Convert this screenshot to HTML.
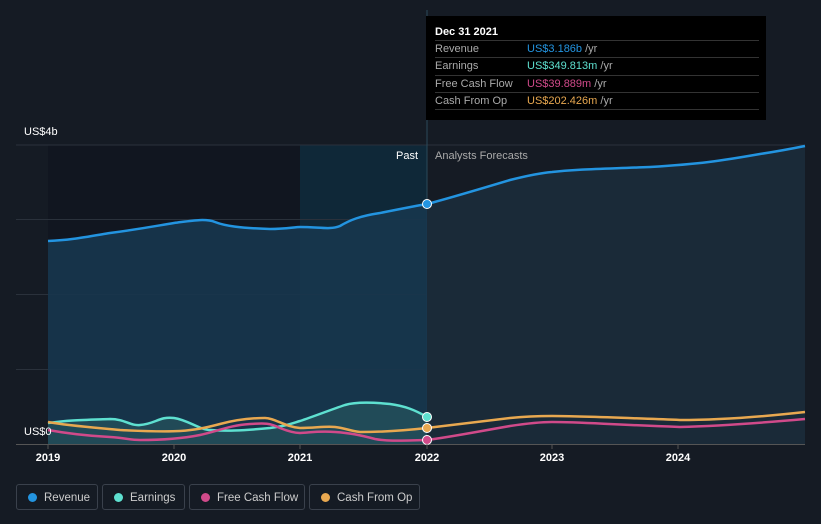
<!DOCTYPE html><html><head><style>
body{margin:0;width:821px;height:524px;background:#151b24;font-family:"Liberation Sans",sans-serif;overflow:hidden;position:relative}
.tt{position:absolute;left:426px;top:16px;width:340px;height:104px;background:#000;color:#fff;font-size:11px}
.tt .h{position:absolute;left:9px;top:10px;font-weight:bold;font-size:11px}
.row{position:absolute;left:9px;width:324px;height:17px;border-top:1px solid #333;color:#aaa;line-height:17px}
.row span{position:absolute;left:92px}
.lg{position:absolute;top:484px;height:26px;border:1px solid #3a414c;border-radius:3px;color:#ccc;font-size:11.5px;line-height:26px;box-sizing:border-box}
.lg i{position:absolute;left:11px;top:8px;width:9px;height:9px;border-radius:50%}
.lg b{font-weight:normal;position:absolute;left:27px}
.ax{position:absolute;top:452px;color:#fff;font-size:11px;font-weight:bold;width:40px;text-align:center}
</style></head><body>
<svg width="821" height="524" style="position:absolute;left:0;top:0">
<rect x="48" y="145" width="252" height="300" fill="#111620"/>
<rect x="300" y="145" width="127" height="300" fill="#0f2838"/>
<g stroke="#2a313b" stroke-width="1">
<line x1="16" y1="145" x2="805" y2="145"/><line x1="16" y1="219.5" x2="805" y2="219.5"/><line x1="16" y1="294.5" x2="805" y2="294.5"/><line x1="16" y1="369.5" x2="805" y2="369.5"/>
</g>
<line x1="16" y1="444.5" x2="805" y2="444.5" stroke="#555"/>
<line x1="427" y1="10" x2="427" y2="444" stroke="#2a4a5a"/>
<path d="M48,241 C70,240 80,238 110,233 C140,229 150,227 174,223 C190,221 205,218 215,222 C225,226 240,228 270,229 C285,229 295,227 300,227 C320,227 330,230 340,226 C350,220 360,216 380,213 C400,209 415,206 427,204 L427,444 L48,444Z" fill="#17364e" opacity="0.9"/>
<path d="M427,204 C450,198 470,192 510,180 C530,175 540,173 552,172 C580,169 600,169 650,167 C700,164 720,161 760,154 C780,151 795,148 805,146 L805,444 L427,444Z" fill="#1a2a38"/>
<path d="M48,423 C70,420 80,420 110,419 C125,419 130,426 140,425 C155,424 160,416 174,418 C188,420 200,430 210,430 C225,431 240,431 270,428 C285,426 290,424 300,421 C315,416 330,410 345,405 C355,402 370,402 390,404 C405,406 415,410 427,417 L427,444 L48,444Z" fill="#2a5a60" opacity="0.6"/>
<g fill="none" stroke-width="2.5">
<path d="M48,241 C70,240 80,238 110,233 C140,229 150,227 174,223 C190,221 205,218 215,222 C225,226 240,228 270,229 C285,229 295,227 300,227 C320,227 330,230 340,226 C350,220 360,216 380,213 C400,209 415,206 427,204 C450,198 470,192 510,180 C530,175 540,173 552,172 C580,169 600,169 650,167 C700,164 720,161 760,154 C780,151 795,148 805,146" stroke="#2394e0"/>
<path d="M48,423 C70,420 80,420 110,419 C125,419 130,426 140,425 C155,424 160,416 174,418 C188,420 200,430 210,430 C225,431 240,431 270,428 C285,426 290,424 300,421 C315,416 330,410 345,405 C355,402 370,402 390,404 C405,406 415,410 427,417" stroke="#5ee0d0"/>
<path d="M48,430 C70,434 90,436 110,437 C125,438 130,440 140,440 C160,440 180,439 200,435 C215,432 230,425 250,424 C265,423 270,423 280,428 C290,432 295,433 300,433 C315,432 320,431 335,432 C350,433 360,435 375,439 C385,441 395,441 427,440 C450,437 470,433 510,426 C530,423 540,422 552,422 C580,422 600,424 680,427 C720,426 760,423 805,419" stroke="#d04a8a"/>
<path d="M48,422 C70,426 100,428 120,430 C140,431 160,432 180,431 C195,430 205,428 220,424 C235,420 250,418 265,418 C275,418 285,427 300,428 C315,428 325,426 335,427 C345,428 350,431 360,432 C380,432 400,431 427,428 C450,425 470,423 510,418 C530,416 540,416 552,416 C580,416 600,417 680,420 C720,420 760,417 805,412" stroke="#e8a850"/>
</g>
<circle cx="427" cy="204" r="4.5" fill="#2394e0" stroke="#fff" stroke-width="1"/>
<circle cx="427" cy="417" r="4.5" fill="#5ee0d0" stroke="#fff" stroke-width="1"/>
<circle cx="427" cy="428" r="4.5" fill="#e8a850" stroke="#fff" stroke-width="1"/>
<circle cx="427" cy="440" r="4.5" fill="#d04a8a" stroke="#fff" stroke-width="1"/>
<g stroke="#555"><line x1="48" y1="444" x2="48" y2="449"/><line x1="174" y1="444" x2="174" y2="449"/><line x1="300" y1="444" x2="300" y2="449"/><line x1="427" y1="444" x2="427" y2="449"/><line x1="552" y1="444" x2="552" y2="449"/><line x1="678" y1="444" x2="678" y2="449"/></g>
</svg>
<div style="position:absolute;left:24px;top:126px;color:#fff;font-size:11px">US$4b</div>
<div style="position:absolute;left:24px;top:426px;color:#fff;font-size:11px">US$0</div>
<div style="position:absolute;left:396px;top:150px;color:#fff;font-size:11px">Past</div>
<div style="position:absolute;left:435px;top:150px;color:#aaa;font-size:11px">Analysts Forecasts</div>
<div class="ax" style="left:28px">2019</div><div class="ax" style="left:154px">2020</div><div class="ax" style="left:280px">2021</div><div class="ax" style="left:407px">2022</div><div class="ax" style="left:532px">2023</div><div class="ax" style="left:658px">2024</div>
<div class="tt"><div class="h">Dec 31 2021</div>
<div class="row" style="top:24px">Revenue<span><font color="#2394e0">US$3.186b</font> /yr</span></div>
<div class="row" style="top:41px">Earnings<span><font color="#5ee0d0">US$349.813m</font> /yr</span></div>
<div class="row" style="top:59px">Free Cash Flow<span><font color="#d04a8a">US$39.889m</font> /yr</span></div>
<div class="row" style="top:76px">Cash From Op<span><font color="#e8a850">US$202.426m</font> /yr</span></div>
<div class="row" style="top:93px;height:0"></div>
</div>
<div class="lg" style="left:16px;width:82px"><i style="background:#2394e0"></i><b>Revenue</b></div>
<div class="lg" style="left:102px;width:83px"><i style="background:#5ee0d0"></i><b>Earnings</b></div>
<div class="lg" style="left:189px;width:116px"><i style="background:#d04a8a"></i><b>Free Cash Flow</b></div>
<div class="lg" style="left:309px;width:111px"><i style="background:#e8a850"></i><b>Cash From Op</b></div>
</body></html>
